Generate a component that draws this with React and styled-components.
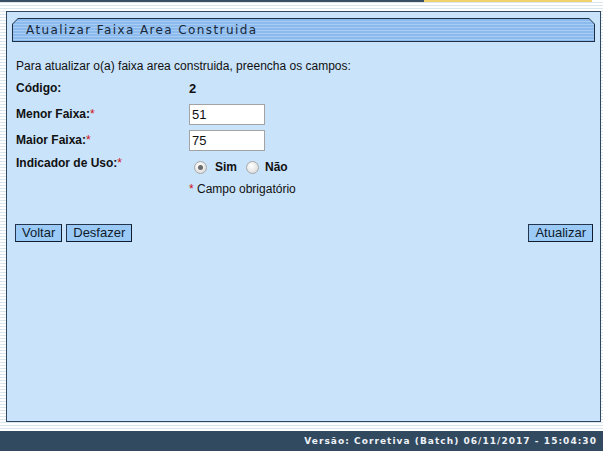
import React from "react";
import styled, { createGlobalStyle } from "styled-components";

const Global = createGlobalStyle`
  html, body { margin: 0; padding: 0; }
  body { font-family: "Liberation Sans", Arial, sans-serif; }
`;

const Page = styled.div`
  width: 603px;
  height: 451px;
  display: flex;
  flex-direction: column;
  background: repeating-linear-gradient(
    to bottom,
    #ffffff 0px,
    #ffffff 2px,
    #d9e6ee 2px,
    #d9e6ee 3px
  );
  overflow: hidden;
`;

const TopLine = styled.div`
  height: 2px;
  display: flex;
  flex-shrink: 0;
`;

const TopSeg = styled.div`
  height: 2px;
  width: ${(p) => p.$w}px;
  background: ${(p) => p.$c};
`;

const Panel = styled.div`
  margin: 9px 2px 0 6px;
  height: 411px;
  box-sizing: border-box;
  border: 1px solid #2f4760;
  background: #c9e3fb;
  padding: 6px 5px 0 5px;
  display: flex;
  flex-direction: column;
  flex-shrink: 0;
`;

const TitleOuter = styled.div`
  height: 24px;
  background: #1d2f45;
  padding: 1px;
  box-sizing: border-box;
  clip-path: polygon(6px 0, calc(100% - 6px) 0, 100% 6px, 100% 100%, 0 100%, 0 6px);
`;

const TitleInner = styled.div`
  height: 100%;
  display: flex;
  align-items: center;
  padding-left: 13px;
  background: repeating-linear-gradient(
    to bottom,
    #8cbaec 0px,
    #8cbaec 2px,
    #a7cdf4 2px,
    #a7cdf4 3px
  );
  clip-path: polygon(5px 0, calc(100% - 5px) 0, 100% 5px, 100% 100%, 0 100%, 0 5px);
  font-family: "DejaVu Sans", Verdana, sans-serif;
  font-size: 12px;
  letter-spacing: 1.4px;
  color: #18283a;
`;

const Form = styled.div`
  display: flex;
  flex-direction: column;
  padding: 14px 0 0 4px;
  font-size: 12px;
  color: #111;
`;

const Row = styled.div`
  display: flex;
  align-items: ${(p) => (p.$top ? "flex-start" : "center")};
  height: ${(p) => p.$h}px;
`;

const Label = styled.div`
  width: 173px;
  flex-shrink: 0;
  font-weight: ${(p) => (p.$bold ? "bold" : "normal")};
  line-height: ${(p) => (p.$lh ? p.$lh + "px" : "normal")};
  padding-top: ${(p) => p.$pt || 0}px;
`;

const Req = styled.span`
  color: #d01010;
  font-weight: normal;
`;

const Value = styled.div`
  font-weight: bold;
  font-size: 13px;
`;

const Input = styled.input`
  width: 76px;
  height: 21px;
  box-sizing: border-box;
  border: 1px solid #a3a3a3;
  background: #fff;
  padding: 1px 2px;
  font-family: "Liberation Sans", Arial, sans-serif;
  font-size: 13px;
  color: #111;
  outline: none;
`;

const Radios = styled.div`
  display: flex;
  align-items: center;
  padding-top: 8px;
  padding-left: 5px;
  font-weight: bold;
  font-size: 12px;
`;

const Radio = styled.span`
  width: 11px;
  height: 11px;
  border-radius: 50%;
  border: 1px solid #a8a8a8;
  background: radial-gradient(circle at 40% 35%, #ffffff 0%, #e6e6e6 60%, #cfcfcf 100%);
  display: inline-flex;
  align-items: center;
  justify-content: center;
  margin-right: ${(p) => p.$mr}px;
  box-sizing: content-box;
  &::after {
    content: "";
    width: 5px;
    height: 5px;
    border-radius: 50%;
    background: ${(p) => (p.$on ? "#6b6b6b" : "transparent")};
  }
`;

const RadioText = styled.span`
  margin-right: ${(p) => p.$mr}px;
`;

const Note = styled.div`
  padding-left: 173px;
  font-size: 12px;
`;

const Buttons = styled.div`
  display: flex;
  justify-content: space-between;
  margin-top: 24px;
  padding: 0 2px 0 3px;
`;

const Group = styled.div`
  display: flex;
  gap: 4px;
`;

const Button = styled.button`
  height: 18px;
  box-sizing: border-box;
  padding: 0 6px;
  border: 1px solid #23364e;
  border-right-color: #0f1d2e;
  border-bottom-color: #0f1d2e;
  background: #9ccaf6;
  font-family: "Liberation Sans", Arial, sans-serif;
  font-size: 13px;
  line-height: 16px;
  color: #0d1b2c;
  cursor: pointer;
`;

const Footer = styled.div`
  margin-top: 9px;
  height: 20px;
  flex-shrink: 0;
  background: #324a5f;
  display: flex;
  align-items: center;
  justify-content: flex-end;
  padding-right: 6px;
  font-family: "DejaVu Sans", Verdana, sans-serif;
  font-weight: bold;
  font-size: 9px;
  letter-spacing: 1.05px;
  color: #eef2f6;
`;

export default function App() {
  return (
    <>
      <Global />
      <Page>
        <TopLine>
          <TopSeg $w={424} $c="#3a4f63" />
          <TopSeg $w={168} $c="#f2d36b" />
        </TopLine>
        <Panel>
          <TitleOuter>
            <TitleInner>Atualizar Faixa Area Construida</TitleInner>
          </TitleOuter>
          <Form>
            <Row $h={20}>
              Para atualizar o(a) faixa area construida, preencha os campos:
            </Row>
            <Row $h={24}>
              <Label $bold>Código:</Label>
              <Value>2</Value>
            </Row>
            <Row $h={28}>
              <Label $bold>
                Menor Faixa:<Req>*</Req>
              </Label>
              <Input defaultValue="51" />
            </Row>
            <Row $h={24}>
              <Label $bold>
                Maior Faixa:<Req>*</Req>
              </Label>
              <Input defaultValue="75" />
            </Row>
            <Row $h={26} $top>
              <Label $bold $lh={18} $pt={2}>
                Indicador de Uso:<Req>*</Req>
              </Label>
              <Radios>
                <Radio $on $mr={8} />
                <RadioText $mr={9}>Sim</RadioText>
                <Radio $mr={6} />
                <RadioText $mr={0}>Não</RadioText>
              </Radios>
            </Row>
            <Row $h={22}>
              <Note>
                <Req>*</Req> Campo obrigatório
              </Note>
            </Row>
          </Form>
          <Buttons>
            <Group>
              <Button>Voltar</Button>
              <Button>Desfazer</Button>
            </Group>
            <Button>Atualizar</Button>
          </Buttons>
        </Panel>
        <Footer>Versão: Corretiva (Batch) 06/11/2017 - 15:04:30</Footer>
      </Page>
    </>
  );
}
